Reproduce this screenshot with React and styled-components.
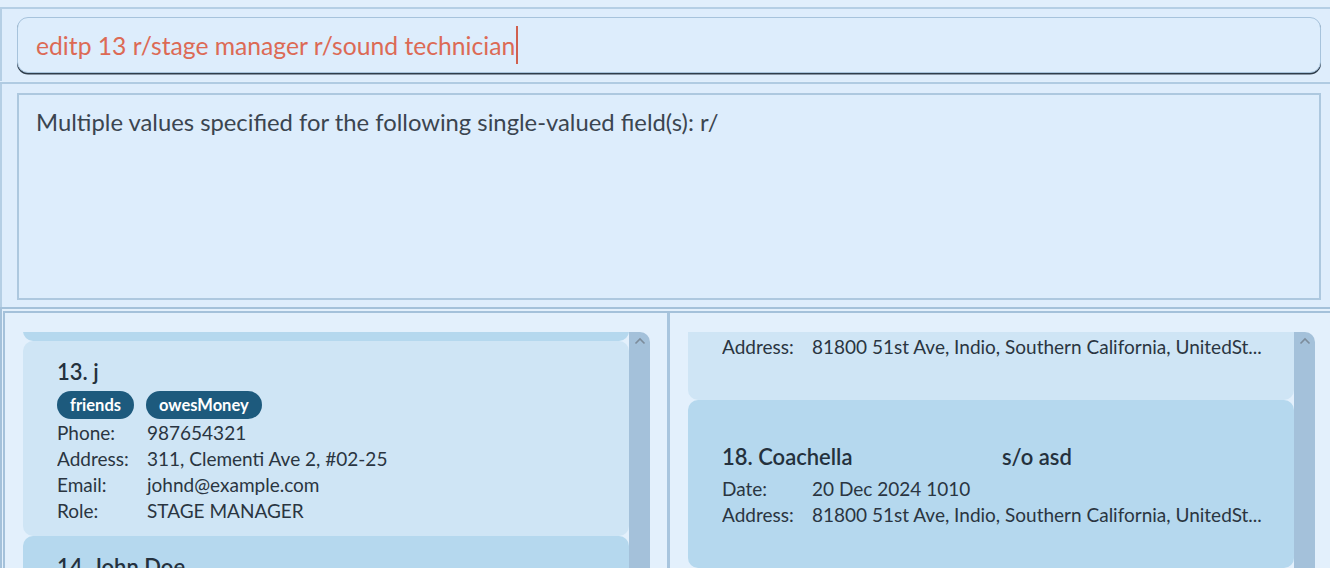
import React, { useLayoutEffect, useRef } from "react";
import styled, { createGlobalStyle } from "styled-components";

const GlobalStyle = createGlobalStyle`
  html, body {
    margin: 0;
    padding: 0;
    background: #e1effc;
    overflow: hidden;
  }
  * { box-sizing: border-box; }
`;

const FONT = `"Segoe UI", Lato, "Noto Sans", sans-serif`;

const Window = styled.div`
  width: 1330px;
  height: 568px;
  display: flex;
  flex-direction: column;
  font-family: ${FONT};
  background: #e1effc;
  overflow: hidden;
`;

const CommandPane = styled.div`
  margin-top: 7px;
  border-top: 2px solid #b5cfe5;
  border-left: 2px solid #b5cfe5;
  padding: 8px 9px 8px 15px;
  background: #deedfc;
`;

const CommandField = styled.div`
  height: 56px;
  display: flex;
  align-items: center;
  padding: 0 18px;
  border: 1px solid #a7c3dc;
  border-radius: 11px;
  background: #ddedfc;
  box-shadow: 0 1.5px 0 #2f3d4b;
  font-size: 24.7px;
  color: #dc6a55;
  white-space: nowrap;
`;

const Caret = styled.span`
  display: inline-block;
  width: 2px;
  height: 38px;
  margin-left: 1px;
  background: #d0604e;
`;

const Rule = styled.div`
  height: 2px;
  margin-top: 1px;
  background: #b0cbe2;
`;

const ResultPane = styled.div`
  border-left: 2px solid #b5cfe5;
  padding: 9px 9px 7px 15px;
  background: #deedfc;
`;

const ResultBox = styled.div`
  height: 207px;
  border: 2px solid #adc8df;
  background: #ddedfc;
  padding: 13px 17px;
  font-size: 23.8px;
  color: #3b4550;
`;

const BottomPane = styled.div`
  flex: 1;
  min-height: 0;
  display: flex;
  border-top: 6px double #a4c1da;
  border-left: 5px double #a4c1da;
  background: #e3f0fc;
`;

const Column = styled.div`
  flex: ${(p) => (p.$grow ? 1 : "none")};
  width: ${(p) => p.$width || "auto"};
  display: flex;
  padding: ${(p) => p.$pad};
  min-height: 0;
`;

const Divider = styled.div`
  width: 3px;
  background: #a8c5de;
`;

const Viewport = styled.div`
  flex: 1;
  min-height: 0;
  overflow: hidden;
  display: flex;
  flex-direction: column;
`;

const Scrollbar = styled.div`
  width: 21px;
  flex: none;
  background: #a4c1da;
  border-top-right-radius: 10px;
  display: flex;
  justify-content: center;
  padding-top: 5px;
`;

const Card = styled.div`
  flex: none;
  background: ${(p) => (p.$alt ? "#b5d8ee" : "#cfe5f5")};
  border-radius: 10px;
  padding: ${(p) => (p.$event ? "42px 25px 40px 34px" : "16px 25px 12px 34px")};
  min-height: ${(p) => (p.$event ? "167px" : "auto")};
  color: #2a3541;
`;

const Title = styled.div`
  display: flex;
  font-size: 22px;
  font-weight: 600;
  color: #24313d;
  line-height: 30px;
  margin-bottom: 4px;
`;

const Name = styled.span`
  min-width: ${(p) => (p.$wide ? "280px" : "0")};
`;

const Tags = styled.div`
  display: flex;
  gap: 12px;
  margin: 1px 0 1px;
`;

const Tag = styled.span`
  height: 28px;
  line-height: 28px;
  padding: 0 13px;
  border-radius: 14px;
  background: #1d5a7d;
  color: #fff;
  font-size: 16.5px;
  font-weight: 700;
`;

const Row = styled.div`
  display: grid;
  grid-template-columns: 90px 1fr;
  font-size: 19px;
  line-height: 26px;
  white-space: nowrap;
  overflow: hidden;
`;

const Chevron = () => (
  <svg width="12" height="8" viewBox="0 0 12 8">
    <path d="M1.5 6.5 L6 2 L10.5 6.5" fill="none" stroke="#7c8c9b" strokeWidth="1.6" />
  </svg>
);

const Field = ({ label, children }) => (
  <Row>
    <span>{label}</span>
    <span>{children}</span>
  </Row>
);

const ADDRESS = "81800 51st Ave, Indio, Southern California, UnitedSt...";

const ScrolledList = ({ anchorOffset, children }) => {
  const ref = useRef(null);
  useLayoutEffect(() => {
    const el = ref.current;
    const target = el.querySelector("[data-anchor]");
    if (target) el.scrollTop = target.offsetTop - el.offsetTop - anchorOffset;
  }, [anchorOffset]);
  return <Viewport ref={ref}>{children}</Viewport>;
};

export default function App() {
  return (
    <Window>
      <GlobalStyle />
      <CommandPane>
        <CommandField>
          editp 13 r/stage manager r/sound technician
          <Caret />
        </CommandField>
      </CommandPane>
      <Rule />
      <ResultPane>
        <ResultBox>Multiple values specified for the following single-valued field(s): r/</ResultBox>
      </ResultPane>
      <BottomPane>
        <Column $width="662px" $pad="19px 17px 0 18px">
          <ScrolledList anchorOffset={9}>
            <Card $alt>
              <Title>12. Alex Yeoh</Title>
              <Field label="Phone:">87438807</Field>
              <Field label="Address:">Blk 30 Geylang Street 29, #06-40</Field>
              <Field label="Email:">alexyeoh@example.com</Field>
              <Field label="Role:">LIGHTING</Field>
            </Card>
            <Card data-anchor>
              <Title>13. j</Title>
              <Tags>
                <Tag>friends</Tag>
                <Tag>owesMoney</Tag>
              </Tags>
              <Field label="Phone:">987654321</Field>
              <Field label="Address:">311, Clementi Ave 2, #02-25</Field>
              <Field label="Email:">johnd@example.com</Field>
              <Field label="Role:">STAGE MANAGER</Field>
            </Card>
            <Card $alt>
              <Title>14. John Doe</Title>
              <Field label="Phone:">98765432</Field>
            </Card>
          </ScrolledList>
          <Scrollbar>
            <Chevron />
          </Scrollbar>
        </Column>
        <Divider />
        <Column $grow $pad="19px 15px 0 18px">
          <ScrolledList anchorOffset={68}>
            <Card $event>
              <Title>
                <Name $wide>17. Coachella</Name>
                <span>s/o asd</span>
              </Title>
              <Field label="Date:">19 Dec 2024 1010</Field>
              <Field label="Address:">{ADDRESS}</Field>
            </Card>
            <Card $event $alt data-anchor>
              <Title>
                <Name $wide>18. Coachella</Name>
                <span>s/o asd</span>
              </Title>
              <Field label="Date:">20 Dec 2024 1010</Field>
              <Field label="Address:">{ADDRESS}</Field>
            </Card>
          </ScrolledList>
          <Scrollbar>
            <Chevron />
          </Scrollbar>
        </Column>
      </BottomPane>
    </Window>
  );
}
